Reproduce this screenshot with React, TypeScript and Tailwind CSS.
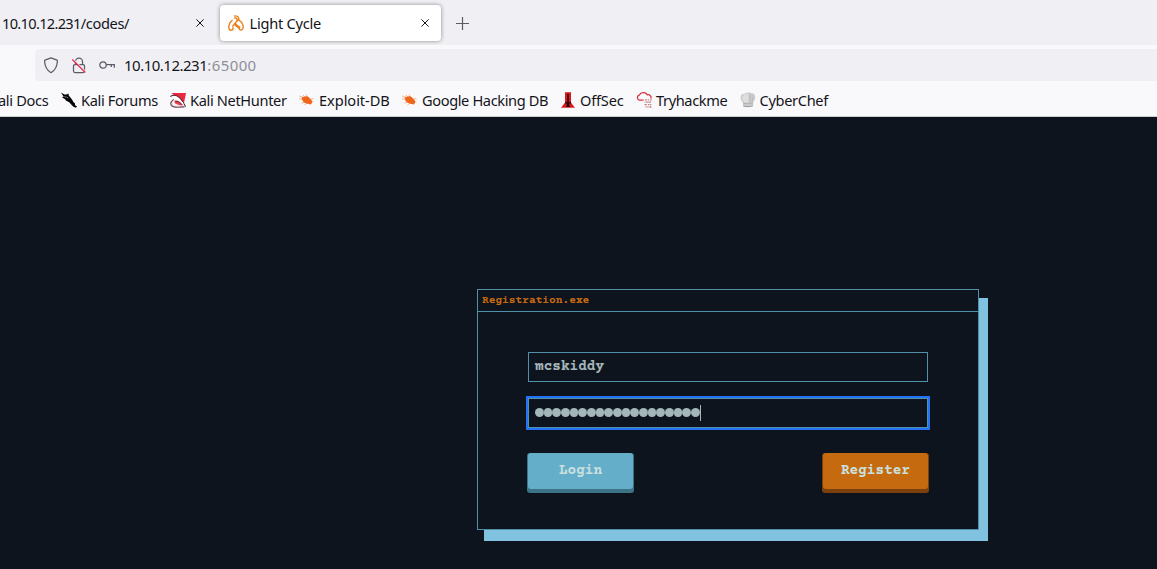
import type { ReactNode } from "react";

function CloseIcon() {
  return (
    <svg width="8" height="8" viewBox="0 0 8 8" stroke="#15141a" strokeWidth="1" fill="none" className="shrink-0">
      <path d="M.4.4 7.6 7.6M7.6.4.4 7.6" />
    </svg>
  );
}

function CycleIcon() {
  return (
    <svg width="16" height="16" viewBox="0 0 16 16" fill="none" stroke="#e8811a" strokeWidth="1.4" className="shrink-0">
      <path d="M6 1.2Q8.6.2 10.4 2.2L10.8 4.6 9.4 6M6.2 2.8 8.4 3.4 9.4 5.2 6.2 9.6 4.2 11.4" />
      <path d="M4.6 5.2Q1.6 7 .9 10.6.4 14.6 2.6 15.2L4.8 14.6 5.2 12.2" />
      <path d="M11 5.2Q14.2 7 15.1 10.6 15.6 14.4 13.6 15L11.6 14.6 10.8 13" />
      <path d="M6.6 8 8.4 10.6 12 13" strokeWidth="2.4" />
    </svg>
  );
}

function ShieldIcon() {
  return (
    <svg width="16" height="17" viewBox="0 0 16 17" fill="none" stroke="#5b5b66" strokeWidth="1.25" className="shrink-0">
      <path d="M8 .9 14.1 3.1Q14.5 3.3 14.4 4.3C14.1 9.5 12.2 13.4 8 15.7 3.8 13.4 1.9 9.5 1.6 4.3Q1.5 3.3 1.9 3.1Z" strokeLinejoin="round" />
    </svg>
  );
}

function LockIcon() {
  return (
    <svg width="16" height="17" viewBox="0 0 16 17" fill="none" stroke="#5b5b66" strokeWidth="1.25" className="shrink-0">
      <rect x="2.5" y="7.5" width="11" height="8" rx="1.5" />
      <path d="M4.5 7.5V4.7a3.5 3.5 0 0 1 7 0v2.8" />
      <path d="m2 1.8 13 13" stroke="#f0f0f4" strokeWidth="1.2" />
      <path d="m1.3 2.5 13 13" stroke="#e22850" strokeWidth="1.25" />
    </svg>
  );
}

function KeyIcon() {
  return (
    <svg width="16" height="10" viewBox="0 0 16 10" fill="none" stroke="#5b5b66" strokeWidth="1.25" className="shrink-0">
      <circle cx="4" cy="5" r="3.2" />
      <path d="M7.2 4.6h8.1v3.2M12.3 4.6v2.4" />
    </svg>
  );
}

function ForumsIcon() {
  return (
    <svg width="16" height="16" viewBox="0 0 16 16" className="shrink-0">
      <path d="M0 .4 3.4 2.4 5.6 2.6 7.4 1.4 7.8 3.4 9 5 11 7.6 12.4 10 14 11.6 14 13.2 16 14.2 15 15.8 12.4 14.8 10.2 12.4 8.2 10.2 5.2 8.8 3.8 7 1 5.6 2.6 4.8Z" fill="#050505" />
      <path d="m5.4 5 1.8 1.2M3.4 4.4l1.6 1" stroke="#ddd" strokeWidth=".6" />
    </svg>
  );
}

function NetHunterIcon() {
  return (
    <svg width="16" height="16" viewBox="0 0 16 16" className="shrink-0">
      <path d="M1.4 1H16L14 11 9 5 4.4 3.4Z" fill="#ec2840" />
      <path d="M.4 4.4Q5.6 1.6 9.4 5.6 13 9 15.6 14.6" fill="none" stroke="#54262f" strokeWidth="1.1" />
      <path d="M.8 6.6Q5.2 3.6 8.8 7L13 12" fill="none" stroke="#fff" strokeWidth="1.5" />
      <path d="M4 7.6Q-.6 10 1.4 13.4 3 15.4 8 15.2L14.6 14.8" fill="none" stroke="#6b434c" strokeWidth="1.2" />
      <path d="M4 8.4Q1 11.6 4 13.4L9.6 14" fill="none" stroke="#f5e5e8" strokeWidth="1.2" />
      <path d="M5 8.6Q3.6 10.6 5.6 11.8L9.4 13.2 13 13.4Q9.2 8 5 8.6Z" fill="#ee4054" />
      <path d="M5.4 9.2Q9 8.8 12.2 12.8" fill="none" stroke="#54262f" strokeWidth=".8" />
    </svg>
  );
}

function BugIcon() {
  return (
    <svg width="16" height="16" viewBox="0 0 16 16" className="shrink-0">
      <path d="M-.5 7.3 4 6.7M.2 4 5 5.5M4 3 6 5M7 2.5 8.5 5M2.4 11.2 6 9.8M5.4 13 8 11M12 6.6l2.6.4M12 9.5l2.4.2" stroke="#f4a67c" strokeWidth=".8" />
      <path d="M2.6 5.4 6 4.4Q8.6 3.8 10 5.5L12.6 8 13.2 10.2 12 12.4 8.4 11.8 5.2 10.6 3.4 8.4Z" fill="#ef6519" />
    </svg>
  );
}

function OffSecIcon() {
  return (
    <svg width="14" height="16" viewBox="0 0 14 16" className="shrink-0">
      <path d="M4 .2h6v10.2L13.9 15.8H.1L4 10.4Z" fill="#d81b20" />
      <path d="M6.2 2.5 7 1.3l.8 1.2v7.4H10v1.5H8.3L8.8 15H5.4l.4-3.6H4.2V9.9h2Z" fill="#2a0a0b" />
    </svg>
  );
}

function CloudIcon() {
  return (
    <svg width="16" height="16" viewBox="0 0 16 16" fill="none" className="shrink-0">
      <path d="M7.6 8.2H3.4A2.6 2.6 0 0 1 3.2 3.2 4.6 4.2 0 0 1 11.4 2.8 2.8 2.8 0 0 1 14.8 6.6" stroke="#d23a42" strokeWidth="1.3" />
      <path d="M9 7.8h1.8m1 0H13m1 0h1.6M10 10.2h1.6m1.4 0h2M8.6 12.6h2.2m1.2 0h1m-1.6 2.4h1m1 0h2" stroke="#d4767b" strokeWidth="1.3" />
      <path d="M8.6 10.2h.9m2.2 0h1m.8 2.4h1.8M9.4 14.9h1.2" stroke="#9a9a9e" strokeWidth="1.2" />
    </svg>
  );
}

function ChefIcon() {
  return (
    <svg width="16" height="16" viewBox="0 0 16 16" className="shrink-0">
      <path d="M3 10.2Q.3 8.8.6 5 .8 1.5 4 2 6 .1 9 .5L12.5 1.2Q15.4 2 15.2 5.4 15 8.9 13.2 10V13.8Q8 15.8 3 14Z" fill="#cbcbcb" />
      <path d="M4.6 2.6Q7 1 8.6 2.2L8.4 10.6 4.8 10.8 2.8 8.2Q1.2 4.2 4.6 2.6Z" fill="#dedede" />
      <path d="M10 3v7M12.6 5.2l-.5 4.8" stroke="#b5b5b5" strokeWidth=".8" />
      <path d="M3.2 11.4Q8 12.2 13 11" stroke="#a9a9a9" strokeWidth=".7" fill="none" />
      <path d="M3.4 14.2Q8 15.4 12.8 14" stroke="#8b8b8b" strokeWidth=".8" fill="none" />
    </svg>
  );
}

function Bookmark({ icon, label, box, text }: { icon?: ReactNode; label: string; box: string; text: string }) {
  return (
    <div className={`flex shrink-0 items-center whitespace-nowrap ${box}`}>
      {icon}
      <span className={text}>{label}</span>
    </div>
  );
}

export default function App() {
  return (
    <div className="flex h-[569px] w-[1157px] flex-col overflow-hidden bg-[#0d141e] font-['Noto_Sans',sans-serif] text-[14.6px] leading-5 text-[#15141a]">
      <div className="flex h-[45px] shrink-0 items-start bg-[#f0f0f4] pt-[5px]">
        <div className="flex h-9 w-[220px] items-center pl-[2px]">
          <span className="w-[194px] tracking-[-0.68px]">10.10.12.231<span className="tracking-[-0.35px]">/codes/</span></span>
          <CloseIcon />
        </div>
        <div className="flex h-9 w-[221px] items-center rounded bg-white pl-2 shadow-[0_0_4px_rgba(0,0,0,0.42)]">
          <CycleIcon />
          <span className="ml-[5.5px] w-[171.5px] tracking-[-0.25px]">Light Cycle</span>
          <CloseIcon />
        </div>
        <svg width="13" height="13" viewBox="0 0 13 13" stroke="#5b5b66" strokeWidth="1.2" className="mt-3 ml-[15px]">
          <path d="M6.5 0v13M0 6.5h13" />
        </svg>
      </div>

      <div className="flex h-[72px] shrink-0 flex-col border-b border-[#cccccf] bg-[#f9f9fb] pt-1">
        <div className="ml-[35px] flex h-8 items-center rounded-l bg-[#f0f0f4] pl-2">
          <ShieldIcon />
          <span className="ml-3 flex"><LockIcon /></span>
          <span className="ml-3 flex"><KeyIcon /></span>
          <span className="ml-[9px] text-[15px] tracking-[-0.5px]">10.10.12.231<span className="tracking-[0.4px] text-[#8f8f98]">:65000</span></span>
        </div>
        <div className="flex h-[35px] items-center pt-[3px]">
          <Bookmark label="ali Docs" box="w-[61px]" text="-ml-[2px] tracking-[-0.32px]" />
          <Bookmark icon={<ForumsIcon />} label="Kali Forums" box="w-[109px]" text="ml-1 tracking-[-0.34px]" />
          <Bookmark icon={<NetHunterIcon />} label="Kali NetHunter" box="w-[129px]" text="ml-1 tracking-[-0.35px]" />
          <Bookmark icon={<BugIcon />} label="Exploit-DB" box="w-[103px]" text="ml-1 tracking-[-0.05px]" />
          <Bookmark icon={<BugIcon />} label="Google Hacking DB" box="w-[159px]" text="ml-1 tracking-[-0.38px]" />
          <Bookmark icon={<OffSecIcon />} label="OffSec" box="w-[75px]" text="ml-[5px] tracking-[-0.2px]" />
          <Bookmark icon={<CloudIcon />} label="Tryhackme" box="w-[104px]" text="ml-1 tracking-[-0.38px]" />
          <Bookmark icon={<ChefIcon />} label="CyberChef" box="w-[90px]" text="ml-[3.5px] tracking-[-0.33px]" />
        </div>
      </div>

      <main className="flex-1 pt-[172px] pl-[477px] font-['Courier_Prime','Liberation_Mono',monospace] font-bold">
        <section className="h-[241px] w-[502px] border border-[#5090a8] bg-[#0d141e] shadow-[8px_10px_0_1px_#80c2df]">
          <header className="h-[22px] border-b border-[#5090a8] pl-1 text-[11.2px] leading-[22px] text-[#c76a10]">Registration.exe</header>
          <form className="px-[50px] pt-10" onSubmit={(e) => e.preventDefault()}>
            <div className="h-[30px] border border-[#5090a8] pl-[6px] text-[14.4px] leading-[29px] text-[#a3b6b9]">mcskiddy</div>
            <div className="mt-4 flex h-[30px] items-center border border-[#5090a8] pl-[6px] outline-2 outline-[#2472f5]">
              <div className="flex pb-px">
                {Array.from({ length: 19 }, (_, i) => (
                  <span key={i} className="h-[9px] w-[8.68px] rounded-full bg-[#a3b6b9]" />
                ))}
              </div>
              <span className="ml-[0.4px] h-4 w-px bg-[#a3b6b9]" />
            </div>
            <div className="-mx-px mt-[25px] flex justify-between text-[14.4px] leading-9 text-[#c9e0df]">
              <button className="flex h-10 w-[107px] flex-col rounded-[3px] bg-[#3d7386] px-px">
                <span className="h-9 w-full rounded-[3px] bg-[#65aec9]">Login</span>
              </button>
              <button className="flex h-10 w-[107px] flex-col rounded-[3px] bg-[#7c400d] px-px">
                <span className="h-9 w-full rounded-[3px] bg-[#c66a10]">Register</span>
              </button>
            </div>
          </form>
        </section>
      </main>
    </div>
  );
}
